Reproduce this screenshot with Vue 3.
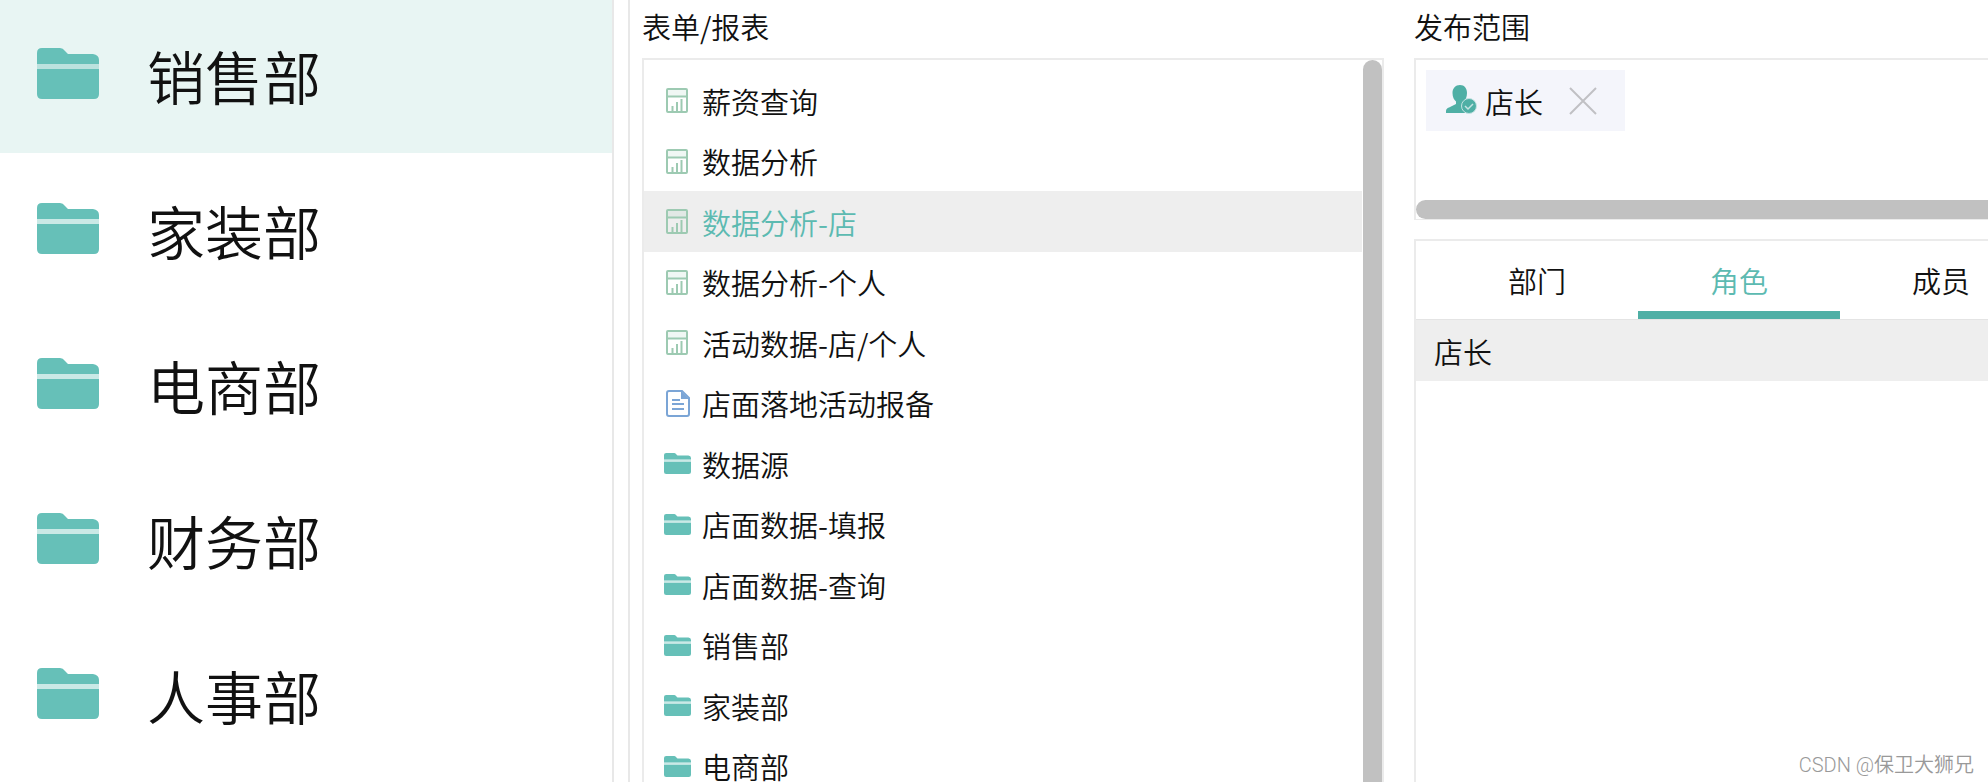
<template>
  <div class="page">
    <svg class="symbols" aria-hidden="true">
      <symbol id="icon-folder" viewBox="0 0 62 51" preserveAspectRatio="none">
        <path d="M0 16V5Q0 0 5 0H23Q26 0 28 3L31 6H56Q62 7 62 12V16Z" />
        <path d="M0 16H62V21H0Z" opacity="0.35" />
        <path d="M0 21H62V46Q62 51 57 51H5Q0 51 0 46Z" />
      </symbol>
      <symbol id="icon-report" viewBox="0 0 22 25">
        <path d="M2 2H20V8H2Z" fill="currentColor" opacity="0.15" />
        <g fill="none" stroke="currentColor" stroke-width="2">
          <rect x="1" y="1" width="20" height="23" rx="1" />
          <path d="M1 8.500H21" />
          <path d="M6.500 23V18M11 23V14M15.500 23V11" />
        </g>
      </symbol>
      <symbol id="icon-form" viewBox="0 0 24 27">
        <g fill="none" stroke="currentColor" stroke-width="2">
          <path d="M3 1H16L23 8V24Q23 26 21 26H3Q1 26 1 24V3Q1 1 3 1Z" />
          <path d="M6 10H14M6 14H18M6 19H18" />
        </g>
        <path d="M15 1L23 9H15Z" fill="currentColor" />
      </symbol>
    </svg>

    <aside class="sidebar">
      <button
        v-for="dept in departments"
        :key="dept"
        type="button"
        :class="['dept', { active: dept === currentDept }]"
        @click="currentDept = dept"
      >
        <svg class="dept-icon"><use href="#icon-folder" /></svg>
        <span>{{ dept }}</span>
      </button>
    </aside>

    <main class="content">
      <section class="column">
        <h2 class="title">表单/报表</h2>
        <div class="form-box">
          <ul class="form-list">
            <li v-for="item in forms" :key="item.name">
              <button
                type="button"
                :class="['form-item', { active: item.name === currentForm }]"
                @click="currentForm = item.name"
              >
                <span class="icon-slot">
                  <svg :class="['icon', item.type]"><use :href="'#icon-' + item.type" /></svg>
                </span>
                <span>{{ item.name }}</span>
              </button>
            </li>
          </ul>
          <div class="scroll-y"></div>
        </div>
      </section>

      <section class="column">
        <h2 class="title">发布范围</h2>
        <div class="scope-box">
          <div class="scope-tags">
            <div v-for="tag in tags" :key="tag" class="tag">
              <svg class="tag-icon" viewBox="0 0 31 29">
                <path
                  fill="#4fafa5"
                  d="M14 0C18.500 0 21 3.500 21 8C21 12 19.500 15 18 16.500V19L24 22V28H0V26Q0 23.500 3 22.500L10 19V16.500C8 15 6.500 12 6.500 8C6.500 3.500 9.500 0 14 0Z"
                />
                <circle cx="23" cy="21" r="7.500" fill="#4fafa5" stroke="#c6e3e3" stroke-width="1" />
                <path d="M19 21L22 24L27 19" fill="none" stroke="#c6e3e3" stroke-width="1.500" />
              </svg>
              <span>{{ tag }}</span>
              <button type="button" class="tag-close" aria-label="删除" @click="removeTag(tag)">
                <svg viewBox="0 0 28 28"><path d="M1 1L27 27M27 1L1 27" /></svg>
              </button>
            </div>
          </div>
          <div class="scroll-x"></div>
        </div>

        <div class="member-box">
          <div class="tabs" role="tablist">
            <button
              v-for="tab in tabs"
              :key="tab"
              type="button"
              role="tab"
              :aria-selected="tab === currentTab"
              :class="['tab', { active: tab === currentTab }]"
              @click="currentTab = tab"
            >{{ tab }}</button>
          </div>
          <button type="button" class="role">店长</button>
        </div>
      </section>
    </main>

    <div class="watermark">CSDN @保卫大狮兄</div>
  </div>
</template>

<script setup>
import { ref } from 'vue'

const departments = ['销售部', '家装部', '电商部', '财务部', '人事部']
const currentDept = ref('销售部')

const forms = [
  { name: '薪资查询', type: 'report' },
  { name: '数据分析', type: 'report' },
  { name: '数据分析-店', type: 'report' },
  { name: '数据分析-个人', type: 'report' },
  { name: '活动数据-店/个人', type: 'report' },
  { name: '店面落地活动报备', type: 'form' },
  { name: '数据源', type: 'folder' },
  { name: '店面数据-填报', type: 'folder' },
  { name: '店面数据-查询', type: 'folder' },
  { name: '销售部', type: 'folder' },
  { name: '家装部', type: 'folder' },
  { name: '电商部', type: 'folder' }
]
const currentForm = ref('数据分析-店')

const tags = ref(['店长'])
const tabs = ['部门', '角色', '成员']
const currentTab = ref('角色')

const removeTag = (tag) => {
  tags.value = tags.value.filter((t) => t !== tag)
}
</script>

<style>
body {
  margin: 0;
  background-color: #fff;
}
</style>

<style scoped>
.page {
  position: relative;
  display: grid;
  grid-template-columns: minmax(0, 614fr) minmax(0, 1360fr);
  gap: 14px;
  height: 100vh;
  overflow: hidden;
  font-family: "Noto Sans CJK SC", sans-serif;
  font-size: 29px;
  font-weight: 350;
  line-height: 32px;
  color: #111;
}

.symbols {
  position: absolute;
  width: 0;
  height: 0;
}

button {
  padding: 0;
  border: none;
  background: none;
  font: inherit;
  color: inherit;
  text-align: left;
  cursor: pointer;
}

.sidebar {
  display: flex;
  flex-direction: column;
  gap: 2px;
  border-right: 2px solid #e8e8e8;
}

.dept {
  display: flex;
  flex-shrink: 0;
  align-items: center;
  gap: 48px;
  height: 153px;
  padding: 0 0 4px 37px;
  font-size: 58px;
  line-height: 80px;
  color: #111;
}

.dept.active {
  background-color: #e8f5f3;
}

.dept-icon {
  width: 62px;
  height: 51px;
  margin-bottom: 2px;
  fill: #66c0b8;
}

.content {
  display: grid;
  grid-template-columns: minmax(0, 742fr) minmax(0, 574fr);
  gap: 30px;
  min-height: 0;
  padding-left: 12px;
  border-left: 2px solid #e8e8e8;
}

.column {
  display: flex;
  flex-direction: column;
  min-height: 0;
}

.title {
  margin: 6px 0 12px;
  font-size: 29px;
  font-weight: inherit;
  line-height: 40px;
}

.form-box {
  display: flex;
  flex: 1;
  gap: 1px;
  min-height: 0;
  overflow: hidden;
  border: 2px solid #ebebeb;
  border-bottom: none;
}

.form-list {
  flex: 1;
  margin: 0;
  padding: 10px 0 0;
  list-style: none;
}

.form-item {
  display: flex;
  align-items: center;
  gap: 10px;
  width: 100%;
  height: 61px;
  padding-left: 20px;
}

.form-list li:nth-child(even) .form-item {
  height: 60px;
}

.form-item.active {
  background-color: #eee;
  color: #5cbab1;
}

.icon-slot {
  display: flex;
  width: 28px;
}

.icon.report {
  width: 22px;
  height: 25px;
  margin-left: 2px;
  color: #9dcab2;
}

.icon.form {
  width: 24px;
  height: 27px;
  margin-left: 2px;
  color: #7ba5d6;
}

.icon.folder {
  width: 27px;
  height: 21px;
  fill: #66c0b8;
}

.scroll-y {
  width: 19px;
  border-radius: 10px 10px 0 0;
  background-color: #c1c1c1;
}

.scope-box {
  display: flex;
  flex-direction: column;
  justify-content: space-between;
  height: 159px;
  border: 2px solid #ebebeb;
  border-right: none;
  border-bottom-width: 1px;
}

.scope-tags {
  display: flex;
  padding: 10px;
}

.tag {
  display: flex;
  align-items: center;
  gap: 8px;
  height: 61px;
  padding: 0 28px 0 20px;
  background-color: #f4f5fb;
}

.tag-icon {
  width: 31px;
  height: 29px;
  margin-bottom: 2px;
}

.tag-close {
  display: flex;
  width: 28px;
  height: 28px;
  margin-left: 18px;
}

.tag-close path {
  fill: none;
  stroke: #c0c0c4;
  stroke-width: 2;
}

.scroll-x {
  height: 19px;
  border-radius: 10px 0 0 10px;
  background-color: #c1c1c1;
}

.member-box {
  flex: 1;
  margin-top: 19px;
  overflow: hidden;
  border-top: 2px solid #ebebeb;
  border-left: 2px solid #ebebeb;
}

.tabs {
  display: flex;
  height: 78px;
  padding-left: 20px;
  border-bottom: 1px solid #e4e4e4;
}

.tab {
  flex: 0 0 202px;
  box-sizing: border-box;
  padding-top: 8px;
  border-bottom: 8px solid transparent;
  text-align: center;
}

.tab.active {
  border-bottom-color: #4fafa5;
  color: #5cbab1;
}

.role {
  display: block;
  width: 100%;
  height: 61px;
  padding-left: 18px;
  background-color: #eee;
}

.watermark {
  position: absolute;
  right: 14px;
  bottom: 3px;
  font-family: Roboto, "Noto Sans CJK SC", sans-serif;
  font-size: 20px;
  line-height: 28px;
  color: #999;
}
</style>
